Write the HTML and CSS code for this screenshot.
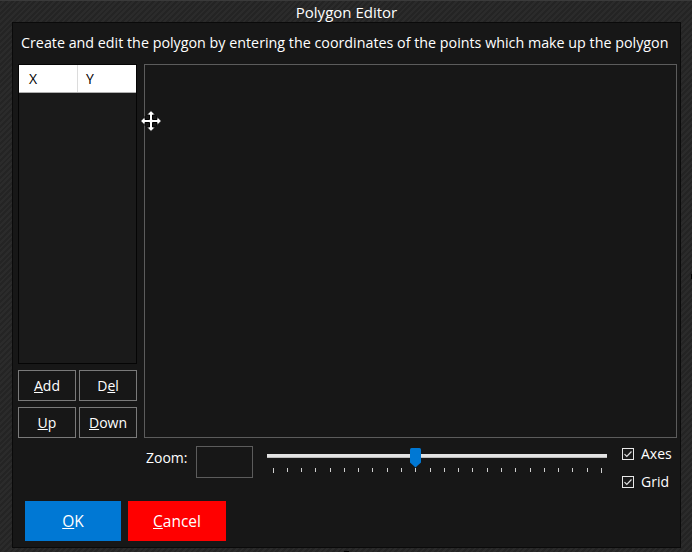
FILE: index.html
```html
<!DOCTYPE html>
<html lang="en">
<head>
<meta charset="utf-8">
<title>Polygon Editor</title>
<link rel="stylesheet" href="styles.css">
</head>
<body>
<div class="window">
  <div class="title">Polygon Editor</div>
  <div class="panel">
    <p class="desc">Create and edit the polygon by entering the coordinates of the points which make up the polygon</p>
    <div class="main">
      <div class="side">
        <div class="list">
          <div class="list-head">
            <span class="col col-x">X</span>
            <span class="col col-y">Y</span>
          </div>
        </div>
        <div class="btns">
          <button class="btn"><u>A</u>dd</button>
          <button class="btn">D<u>e</u>l</button>
          <button class="btn"><u>U</u>p</button>
          <button class="btn"><u>D</u>own</button>
        </div>
      </div>
      <div class="work">
        <div class="canvas"></div>
        <div class="controls">
          <span class="zoom-label">Zoom:</span>
          <div class="zoom-box"></div>
          <div class="slider">
            <div class="track"></div>
            <div class="ticks">
              <i></i><i></i><i></i><i></i><i></i><i></i><i></i><i></i><i></i><i></i><i></i><i></i>
              <i></i><i></i><i></i><i></i><i></i><i></i><i></i><i></i><i></i><i></i><i></i><i></i>
            </div>
            <svg class="thumb" width="11" height="20" viewBox="0 0 11 20"><path d="M0 1.5Q0 0 1.5 0H9.5Q11 0 11 1.5V14.5L5.5 19.5L0 14.5Z" fill="#0078d4"/></svg>
          </div>
          <div class="checks">
            <label class="check"><svg width="12" height="12" viewBox="0 0 12 12"><rect x="0.5" y="0.5" width="11" height="11" fill="#1a1a1a" stroke="#e8e8e8"/><path d="M2.5 6.2L4.8 8.5L9.5 3.5" fill="none" stroke="#e0e0e0" stroke-width="1.2"/></svg><span>Axes</span></label>
            <label class="check"><svg width="12" height="12" viewBox="0 0 12 12"><rect x="0.5" y="0.5" width="11" height="11" fill="#1a1a1a" stroke="#e8e8e8"/><path d="M2.5 6.2L4.8 8.5L9.5 3.5" fill="none" stroke="#e0e0e0" stroke-width="1.2"/></svg><span>Grid</span></label>
          </div>
        </div>
      </div>
    </div>
    <div class="footer">
      <button class="dlg ok"><u>O</u>K</button>
      <button class="dlg cancel"><u>C</u>ancel</button>
    </div>
  </div>
  <svg class="cursor" width="22" height="22" viewBox="0 0 22 22"><path d="M11 0.5L15.5 5H12.5V9.5H17V6.5L21.5 11L17 15.5V12.5H12.5V17H15.5L11 21.5L6.5 17H9.5V12.5H5V15.5L0.5 11L5 6.5V9.5H9.5V5H6.5Z" fill="#fff" stroke="#000" stroke-width="1" stroke-linejoin="miter"/></svg>
  <span class="mark mark-bottom"></span>
  <span class="mark mark-right"></span>
</div>
</body>
</html>
```
FILE: styles.css
```css
* { box-sizing: border-box; }
html, body { margin: 0; padding: 0; background: #262626; }
body { font-family: "Open Sans", "Noto Sans", sans-serif; color: #fff; }

.window {
  position: relative;
  width: 692px;
  height: 552px;
  padding: 0 11px 4px 12px;
  display: flex;
  flex-direction: column;
  background: repeating-linear-gradient(135deg, #242424 0 2px, #2b2b2b 2px 4px);
  border-top: 1px solid #3a3a3a;
  overflow: hidden;
}

.title {
  height: 21px;
  padding-top: 1px;
  line-height: 20px;
  font-size: 15px;
  text-align: center;
  color: #fff;
}

.panel {
  height: 526px;
  background: #171717;
  border: 1px solid #0a0a0a;
  padding: 0 3px 0 5px;
  display: flex;
  flex-direction: column;
}

.desc {
  margin: 10px 0 12px 3px;
  font-size: 14.3px;
  line-height: 19px;
  white-space: nowrap;
  color: #fff;
}

.main { display: flex; gap: 7px; }

.side { width: 119px; display: flex; flex-direction: column; gap: 6px; }

.list {
  height: 300px;
  border: 1px solid #050505;
  background: #1a1a1a;
}

.list-head {
  display: flex;
  height: 28px;
  background: #fff;
  border-bottom: 1px solid #b0b0b0;
  color: #000;
  font-size: 14px;
}

.col { display: flex; align-items: center; line-height: 20px; }
.col-x { width: 59px; padding-left: 10px; border-right: 1px solid #dcdcdc; }
.col-y { flex: 1; padding-left: 8px; }

.btns {
  display: grid;
  grid-template-columns: 58px 58px;
  grid-auto-rows: 31px;
  column-gap: 3px;
  row-gap: 6px;
}

.btn {
  margin: 0;
  padding: 0;
  background: transparent;
  border: 1px solid #7a7a7a;
  color: #fff;
  font-family: inherit;
  font-size: 14px;
  line-height: 20px;
}

.work { width: 533px; display: flex; flex-direction: column; }

.canvas {
  height: 374px;
  border: 1px solid #5c5c5c;
  background: #171717;
}

.controls {
  margin-top: 8px;
  height: 48px;
  display: flex;
  align-items: flex-start;
}

.zoom-label {
  margin: 2px 0 0 2px;
  width: 50px;
  font-size: 14px;
  line-height: 20px;
}

.zoom-box {
  width: 57px;
  height: 32px;
  border: 1px solid #5c5c5c;
  background: #171717;
}

.slider {
  position: relative;
  margin-left: 14px;
  width: 340px;
  height: 30px;
}

.track {
  margin-top: 8px;
  height: 4px;
  background: #e3e3e3;
  border-bottom: 1px solid #bdbdbd;
}

.ticks {
  margin-top: 10px;
  padding: 0 5px 0 5.5px;
  display: flex;
  justify-content: space-between;
  align-items: flex-start;
}

.ticks i {
  display: block;
  width: 1px;
  height: 4px;
  background: #cfcfcf;
}

.ticks i:first-child, .ticks i:last-child { height: 5px; }

.thumb {
  position: absolute;
  left: 143px;
  top: 2px;
}

.checks {
  margin: 2px 0 0 15px;
  display: flex;
  flex-direction: column;
  gap: 16px;
}

.check {
  display: flex;
  align-items: center;
  gap: 7px;
  height: 12px;
  font-size: 14px;
  line-height: 12px;
}

.check svg { display: block; flex: none; }

.footer {
  margin-top: 7px;
  padding-left: 7px;
  display: flex;
  gap: 7px;
}

.dlg {
  margin: 0;
  padding: 0;
  height: 40px;
  border: 0;
  color: #fff;
  font-family: inherit;
  font-size: 15.5px;
  line-height: 20px;
}

.ok { width: 96px; background: #0078d4; }
.cancel { width: 98px; background: #ff0000; }

.cursor {
  position: absolute;
  left: 139.5px;
  top: 108.5px;
}

.mark { position: absolute; background: #000; }
.mark-bottom { left: 344px; top: 550px; width: 5px; height: 2px; }
.mark-right { left: 691px; top: 273px; width: 1px; height: 5px; }
```
